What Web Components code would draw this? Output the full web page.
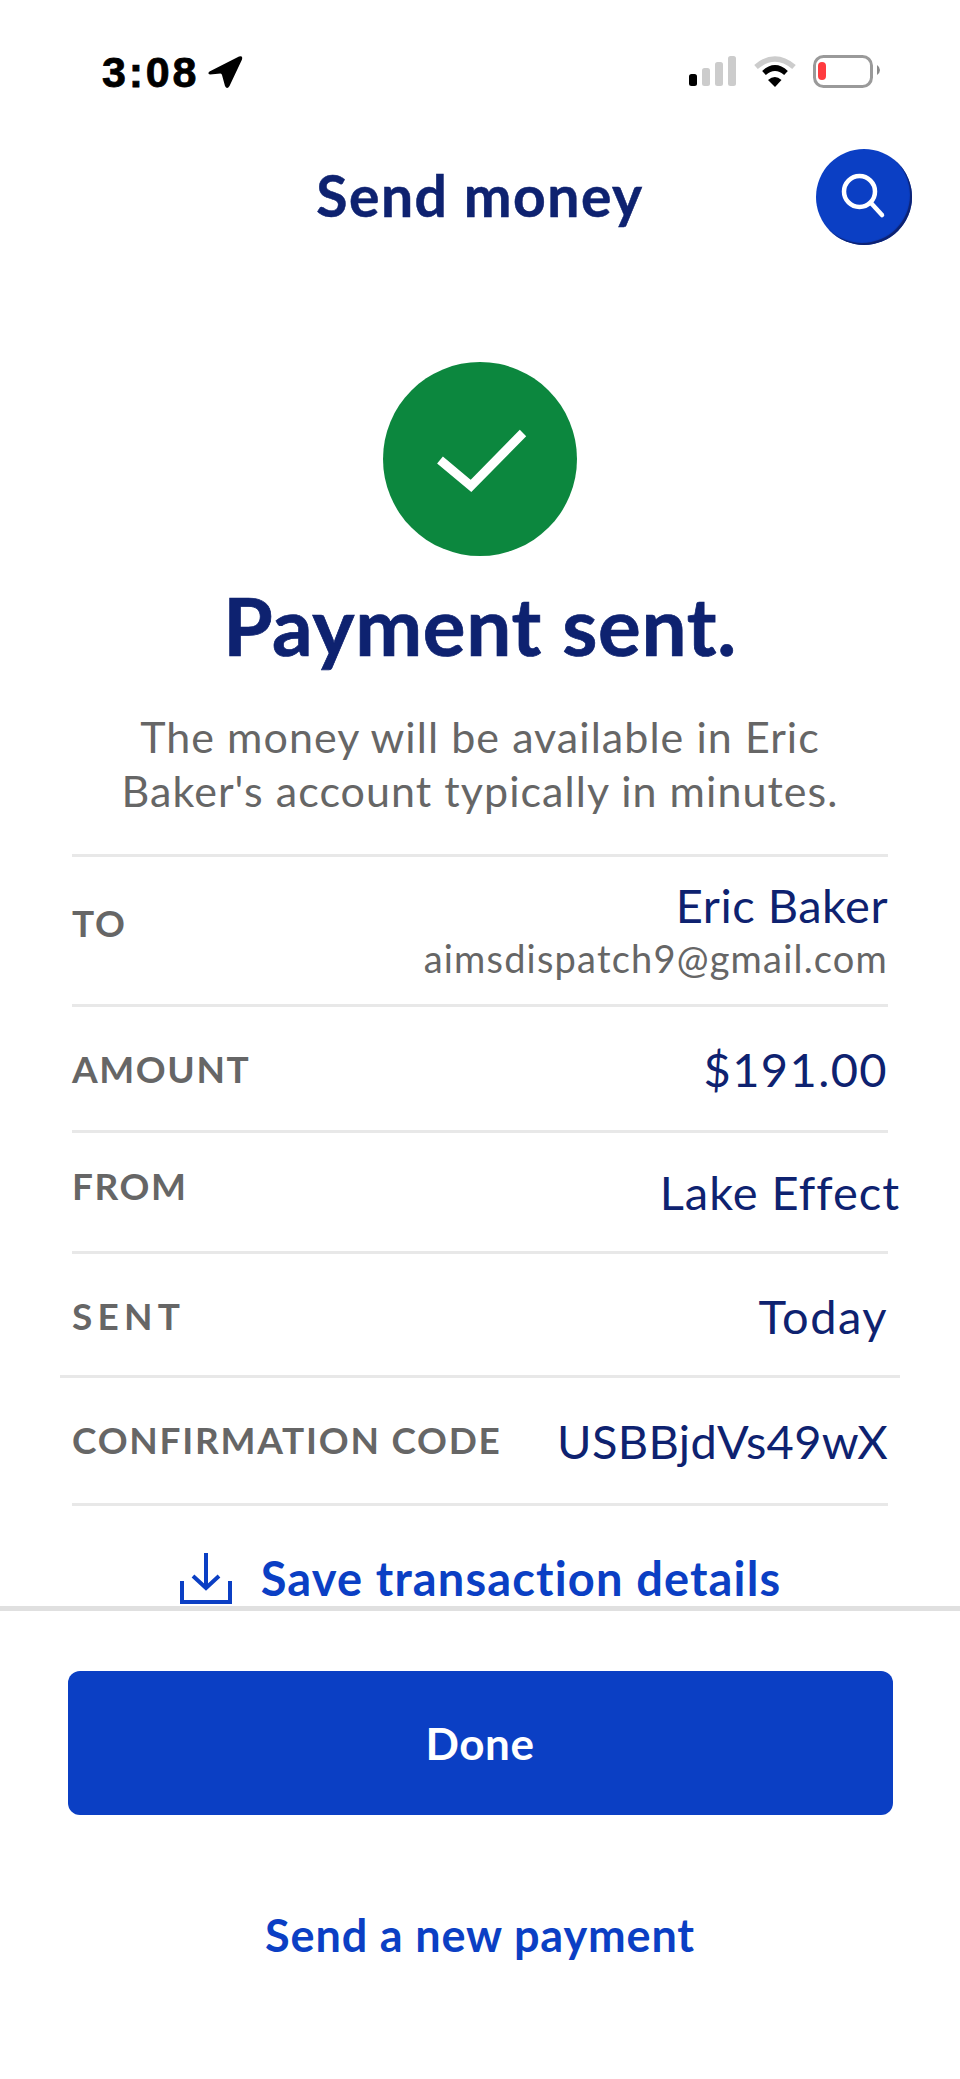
<!DOCTYPE html>
<html lang="en"><head><meta charset="utf-8"><title>Send money</title>
<style>
html,body{margin:0;padding:0;background:#fff}
body{font-family:Lato,"Liberation Sans",sans-serif;width:960px;height:2079px;overflow:hidden}
</style></head>
<body>
<payment-screen>
  <status-bar slot="top" time="3:08"></status-bar>
  <app-header slot="top" heading="Send money"></app-header>
  <success-hero slot="top" heading="Payment sent.">The money will be available in Eric<br>Baker's account typically in minutes.</success-hero>
  <detail-list slot="top">
    <detail-row label="TO" h="150" lab-shift="-8" val-shift="-2" val-ls=".5"><span>Eric Baker</span><small>aimsdispatch9@gmail.com</small></detail-row>
    <detail-row label="AMOUNT" h="126" val-ls="1.4"><span>$191.00</span></detail-row>
    <detail-row label="FROM" h="121" lab-shift="-6" over="12"><span>Lake Effect</span></detail-row>
    <detail-row label="SENT" h="124" wide lab-shift="1" val-shift="1" lab-ls="5.2" val-ls="1.5"><span>Today</span></detail-row>
    <detail-row label="CONFIRMATION CODE" h="128" lab-shift="-1" lab-ls="1.75" val-ls=".35"><span>USBBjdVs49wX</span></detail-row>
  </detail-list>
  <save-link slot="top">Save transaction details</save-link>
  <primary-button slot="bottom">Done</primary-button>
  <text-button slot="bottom">Send a new payment</text-button>
</payment-screen>
<script>
function def(name, css, html){
  customElements.define(name, class extends HTMLElement{
    connectedCallback(){
      if(this.shadowRoot) return;
      const r=this.attachShadow({mode:'open'});
      r.innerHTML='<style>'+css+'</style>'+(typeof html==='function'?html(this):html);
    }
  });
}
def('payment-screen',`
  :host{display:flex;flex-direction:column;width:960px;height:2079px;background:#fff}
  .top{height:1606px;overflow:hidden;flex:none}
  .bottom{flex:1;border-top:5px solid #e0e0e0;display:flex;flex-direction:column;align-items:center;padding-top:60px}
`,`<div class="top"><slot name="top"></slot></div><div class="bottom"><slot name="bottom"></slot></div>`);

def('status-bar',`
  :host{display:flex;justify-content:space-between;align-items:flex-start;height:130px;box-sizing:border-box;padding:54px 78px 0 102px}
  .l{display:flex;align-items:center;gap:8px}
  .t{font:700 43px/36px "Liberation Sans",Arial,sans-serif;color:#000;letter-spacing:2.800px;-webkit-text-stroke:.8px #000}
  svg{display:block}
`,h=>`<div class="l"><span class="t">${h.getAttribute('time')}</span>
  <svg width="36" height="36" viewBox="0 0 36 36"><path d="M2.500 17.500 L32 2.500 Q36 1 35 5.500 L22.500 32 Q20 36 18 32 L15 21 Q14.700 19.800 13.500 19.500 L3 20.500 Q0 19.500 2.500 17.500Z" fill="#000"/></svg></div>
  <div class="r"><svg width="196" height="36" viewBox="0 0 196 36">
  <rect x="3" y="20" width="8" height="12" rx="2.500" fill="#000"/>
  <rect x="16" y="14" width="8" height="18" rx="2.500" fill="#ccc"/>
  <rect x="29" y="8" width="8" height="24" rx="2.500" fill="#ccc"/>
  <rect x="42" y="2" width="8" height="30" rx="2.500" fill="#ccc"/>
  <path d="M70 13 Q89 -3 108 13" fill="none" stroke="#ccc" stroke-width="5.500"/>
  <path d="M78 19 Q89 9 100 19" fill="none" stroke="#000" stroke-width="5.500"/>
  <path d="M82 26 Q89 20 95.500 26 L89 33Z" fill="#000"/>
  <rect x="128.500" y="2.500" width="57" height="30" rx="9" fill="none" stroke="#9a9a9a" stroke-width="3"/>
  <rect x="132" y="8" width="8" height="18" rx="4" fill="#ff3b3f"/>
  <path d="M191 11 Q194 13 194 16 Q194 19 191 21Z" fill="#8a8a8a"/>
  </svg></div>`);

def('app-header',`
  :host{display:block;position:relative;height:136px}
  h1{margin:0;font:700 57px/130px Lato,sans-serif;color:#0e2270;text-align:center;letter-spacing:1.5px;-webkit-text-stroke:.5px #0e2270}
  button{position:absolute;left:816px;top:19px;width:96px;height:96px;border-radius:50%;border:0;padding:0;background:#0b3fc4;box-shadow:inset -2px -2px 1px #0e2270;display:flex;align-items:center;justify-content:center}
`,h=>`<h1>${h.getAttribute('heading')}</h1><button aria-label="Search"><svg width="48" height="48" viewBox="0 0 48 48" fill="none" stroke="#fff" stroke-width="4.500" stroke-linecap="round"><circle cx="19.500" cy="18.500" r="15.500"/><path d="M31 30 L42 42"/></svg></button>`);

def('success-hero',`
  :host{display:flex;flex-direction:column;align-items:center;padding-top:96px}
  .c{width:194px;height:194px;border-radius:50%;background:#0c873e;display:flex;align-items:center;justify-content:center}
  h2{margin:19px 0 0;font:700 80px/100px Lato,sans-serif;color:#0e2270;letter-spacing:.7px;-webkit-text-stroke:.7px #0e2270}
  p{margin:35px 0 0;font:400 43px/54px Lato,sans-serif;color:#666;text-align:center;letter-spacing:1.05px;height:144px}
`,h=>`<div class="c"><svg width="194" height="194" viewBox="0 0 194 194"><path d="M57 98 L88 124 L140 71" fill="none" stroke="#fff" stroke-width="9"/></svg></div><h2>${h.getAttribute('heading')}</h2><p><slot></slot></p>`);

def('detail-list',`:host{display:block;padding:0 72px}
 .b{height:3px;background:#e8e8e8}`,`<div class="b"></div><slot></slot>`);

def('detail-row',`
  :host{display:block}
  .row{display:flex;justify-content:space-between;align-items:center;box-sizing:border-box;border-bottom:3px solid #e8e8e8}
  .lab{font:700 37px/44px Lato,sans-serif;color:#666;white-space:nowrap;letter-spacing:1.6px}
  .val{display:flex;flex-direction:column;align-items:flex-end;white-space:nowrap;color:#0e2270;font:400 47px/54px Lato,sans-serif;letter-spacing:1px}
  ::slotted(small){font:400 38px/44px Lato,sans-serif;color:#666;letter-spacing:1.2px;margin-top:4px}
`,h=>{
  const ls=+h.getAttribute('lab-shift')||0, vs=+h.getAttribute('val-shift')||0, over=h.getAttribute('over')||0;
  const wide=h.hasAttribute('wide'), lab=h.getAttribute('lab-ls'), v=h.getAttribute('val-ls');
  return `<div class="row" style="height:${h.getAttribute('h')}px;${wide?'margin:0 -12px;padding:0 12px;':''}">
  <span class="lab" style="margin-top:${ls*2}px;${lab?'letter-spacing:'+lab+'px;':''}">${h.getAttribute('label')}</span>
  <div class="val" style="margin-top:${vs*2}px;margin-right:-${over}px;${v?'letter-spacing:'+v+'px;':''}"><slot></slot></div></div>`;
});

def('save-link',`
  :host{display:flex;align-items:center;justify-content:center;gap:28px;margin-top:41px;height:62px;font:700 47px/62px Lato,sans-serif;color:#0b3fc4;letter-spacing:1.15px}
  svg{display:block;margin-top:2px;flex:none}
`,`<svg width="54" height="52" viewBox="0 0 54 52" fill="none" stroke="#0b3fc4" stroke-width="4"><path d="M27 0 V35 M14 23 L27 35 L40 23"/><path d="M3 28 V49 H51 V28"/></svg><span><slot></slot></span>`);

def('primary-button',`
  :host{display:flex;width:825px;height:144px;border-radius:12px;background:#0b3fc4;color:#fff;font:700 44px/144px Lato,sans-serif;justify-content:center;letter-spacing:.5px;flex:none}
`,`<slot></slot>`);

def('text-button',`
  :host{display:block;margin-top:92px;font:700 45px/56px Lato,sans-serif;color:#0b3fc4;letter-spacing:.85px}
`,`<slot></slot>`);
</script>
</body></html>
